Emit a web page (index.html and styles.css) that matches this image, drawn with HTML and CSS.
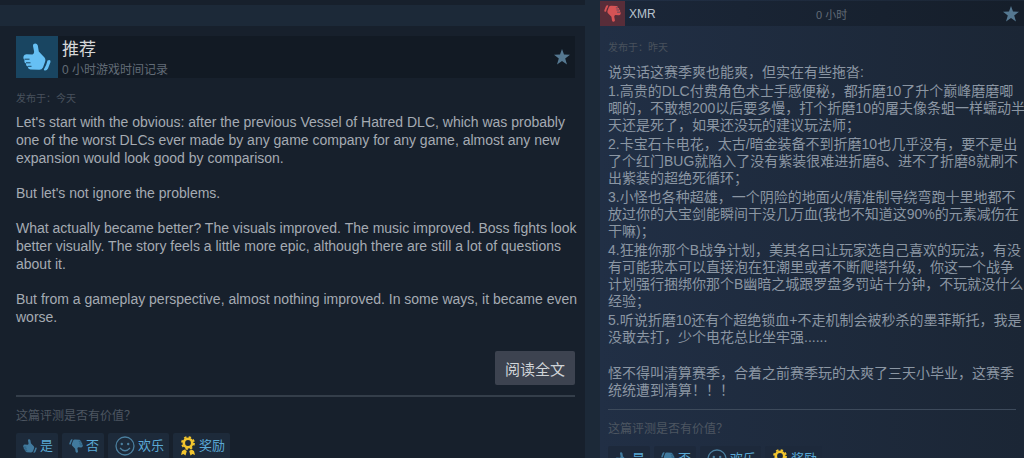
FILE: index.html
```html
<!DOCTYPE html>
<html lang="zh-CN">
<head>
    <meta charset="UTF-8">
    <meta name="viewport" content="width=device-width, initial-scale=1.0">
    <title>评测</title>
    <link rel="stylesheet" href="styles.css">
</head>
<body>
    <!-- shared icons -->
    <svg class="sprite" aria-hidden="true">
        <symbol id="thumb" viewBox="0 0 28 28">
            <path d="M10 3C9.800 -.2 14 -.5 14.800 2.500L15.800 8.500L21.500 14.500Q23 16.500 22 19L20 24.500Q18.800 27 16 26.800L7.500 26.500Q4.500 26.200 5 23.500Q2.600 23.200 3 20.500Q.8 19.800 1.500 17Q-.3 15.500 .8 12.800Q1.300 11.200 3.500 11.200L9.500 11.500Q11.500 10.500 11 8Z"/>
            <path d="M24.500 17.500Q27.800 16 27.500 19L25 25.500Q23.800 28 21.500 27.500Q20.300 27 21.300 25.500Q23.500 22 24.500 17.500Z"/>
            <path class="finger" d="M1.500 16.200H6.500M3 19.800H7.500M5 23.300H8.500"/>
        </symbol>
        <symbol id="star" viewBox="0 0 16 16">
            <path d="M8 0L10 5.600L16 5.800L11.200 9.400L13 15.500L8 12L3 15.500L4.800 9.400L0 5.800L6 5.600Z"/>
        </symbol>
        <symbol id="smile" viewBox="0 0 20 20">
            <circle cx="10" cy="10" r="9" fill="none" stroke="currentColor" stroke-width="1.300"/>
            <circle cx="6.800" cy="8" r="1.200"/>
            <circle cx="13.200" cy="8" r="1.200"/>
            <path d="M5 12Q10 17.500 15 12" fill="none" stroke="currentColor" stroke-width="1.300"/>
        </symbol>
        <symbol id="award" viewBox="0 0 16 20">
            <circle cx="8" cy="7" r="4.200" fill="none" stroke="currentColor" stroke-width="2.600"/>
            <circle cx="8" cy="7" r="6" fill="none" stroke="currentColor" stroke-width="1.800" stroke-dasharray="2.400 2.310"/>
            <path d="M4.500 13.500L6.800 15L5.500 19.500L3.500 18L1 19L2 15ZM11.500 13.500L9.200 15L10.500 19.500L12.500 18L15 19L14 15Z"/>
        </symbol>
    </svg>

    <main class="reviews">
        <section class="column-left">
            <div class="previous-card"></div>
            <article class="card card-main">
                <header class="card-header">
                    <span class="thumb-box"><svg><use href="#thumb"/></svg></span>
                    <div class="header-text">
                        <h2>推荐</h2>
                        <p>0 小时游戏时间记录</p>
                    </div>
                    <svg class="star"><use href="#star"/></svg>
                </header>
                <div class="posted">发布于：今天</div>
                <div class="content">
                    <p>Let's start with the obvious: after the previous Vessel of Hatred DLC, which was probably<br>one of the worst DLCs ever made by any game company for any game, almost any new<br>expansion would look good by comparison.</p>
                    <p>But let's not ignore the problems.</p>
                    <p>What actually became better? The visuals improved. The music improved. Boss fights look<br>better visually. The story feels a little more epic, although there are still a lot of questions<br>about it.</p>
                    <p>But from a gameplay perspective, almost nothing improved. In some ways, it became even<br>worse.</p>
                </div>
                <div class="more">
                    <button type="button" class="read-more">阅读全文</button>
                </div>
                <footer class="rate">
                    <p>这篇评测是否有价值？</p>
                    <div class="rate-buttons">
                        <button type="button"><svg class="icon-thumb"><use href="#thumb"/></svg>是</button>
                        <button type="button"><svg class="icon-thumb down"><use href="#thumb"/></svg>否</button>
                        <button type="button"><svg class="icon-smile"><use href="#smile"/></svg>欢乐</button>
                        <button type="button"><svg class="icon-award"><use href="#award"/></svg>奖励</button>
                    </div>
                </footer>
            </article>
        </section>

        <article class="card card-side">
            <header class="side-header">
                <span class="thumb-box negative"><svg class="down"><use href="#thumb"/></svg></span>
                <h2>XMR</h2>
                <span class="hours">0 小时</span>
                <svg class="star"><use href="#star"/></svg>
            </header>
            <div class="side-body">
                <div class="posted">发布于：昨天</div>
                <div class="content-cn">
                    <p>说实话这赛季爽也能爽，但实在有些拖沓:</p>
                    <p>1.高贵的DLC付费角色术士手感便秘，都折磨10了升个巅峰磨磨唧<br>唧的，不敢想200以后要多慢，打个折磨10的屠夫像条蛆一样蠕动半<br>天还是死了，如果还没玩的建议玩法师；</p>
                    <p>2.卡宝石卡电花，太古/暗金装备不到折磨10也几乎没有，要不是出<br>了个红门BUG就陷入了没有紫装很难进折磨8、进不了折磨8就刷不<br>出紫装的超绝死循环；</p>
                    <p>3.小怪也各种超雄，一个阴险的地面火/精准制导绕弯跑十里地都不<br>放过你的大宝剑能瞬间干没几万血(我也不知道这90%的元素减伤在<br>干嘛)；</p>
                    <p>4.狂推你那个B战争计划，美其名曰让玩家选自己喜欢的玩法，有没<br>有可能我本可以直接泡在狂潮里或者不断爬塔升级，你这一个战争<br>计划强行捆绑你那个B幽暗之城跟罗盘多罚站十分钟，不玩就没什么<br>经验；</p>
                    <p>5.听说折磨10还有个超绝锁血+不走机制会被秒杀的墨菲斯托，我是<br>没敢去打，少个电花总比坐牢强......</p>
                    <p class="closing">怪不得叫清算赛季，合着之前赛季玩的太爽了三天小毕业，这赛季<br>统统遭到清算！！！</p>
                </div>
                <footer class="rate">
                    <p>这篇评测是否有价值？</p>
                    <div class="rate-buttons">
                        <button type="button"><svg class="icon-thumb"><use href="#thumb"/></svg>是</button>
                        <button type="button"><svg class="icon-thumb down"><use href="#thumb"/></svg>否</button>
                        <button type="button"><svg class="icon-smile"><use href="#smile"/></svg>欢乐</button>
                        <button type="button"><svg class="icon-award"><use href="#award"/></svg>奖励</button>
                    </div>
                </footer>
            </div>
        </article>
    </main>
</body>
</html>
```
FILE: styles.css
```css
* {
    box-sizing: border-box;
}
body {
    margin: 0;
    height: 100vh;
    overflow: hidden;
    background-color: #1c2938;
    color: #a5abb3;
    font-family: "Liberation Sans", "Noto Sans CJK SC", sans-serif;
    font-size: 14px;
}
h2, p {
    margin: 0;
    font-weight: normal;
}
svg {
    fill: currentColor;
    flex: none;
}
.sprite {
    position: absolute;
    width: 0;
    height: 0;
}
.finger {
    fill: none;
    stroke: #194561;
    stroke-width: 1;
}
.down {
    transform: rotate(180deg);
}
.reviews {
    display: flex;
    gap: 15px;
    height: 100%;
}
.column-left {
    flex: 585;
    min-width: 0;
    display: flex;
    flex-direction: column;
    gap: 21px;
}
.previous-card {
    flex: none;
    height: 5px;
    background-color: #17202c;
}
.card-main {
    flex: 1;
    padding: 10px 10px 0 16px;
    background-color: #17202c;
}

/* header of the large review */
.card-header {
    display: flex;
    align-items: center;
    height: 42px;
    padding-right: 5px;
    background-color: #121a24;
}
.thumb-box {
    display: flex;
    align-items: center;
    justify-content: center;
    width: 42px;
    height: 42px;
    background-color: #194561;
    color: #66c0f4;
}
.thumb-box svg {
    width: 28px;
    height: 28px;
}
.header-text {
    flex: 1;
    padding: 4px 0 0 4px;
}
.header-text h2 {
    font-size: 17px;
    line-height: 22px;
    color: #d6d7d8;
}
.header-text p {
    font-size: 12px;
    line-height: 18px;
    color: #626c77;
}
.star {
    width: 16px;
    height: 16px;
    color: #557891;
}
.posted {
    font-size: 10px;
    line-height: 16px;
    color: #48515c;
}
.card-main .posted {
    padding-top: 13px;
}
.content {
    padding-top: 6px;
    line-height: 18px;
    white-space: nowrap;
}
.content p + p {
    margin-top: 17px;
}
.more {
    display: flex;
    justify-content: flex-end;
    padding-top: 25px;
}
.read-more {
    height: 34px;
    padding: 0 10px;
    border: none;
    border-radius: 2px;
    background-color: #3d4350;
    color: #d0d4d8;
    font: inherit;
    font-size: 15px;
    cursor: pointer;
}

/* helpful votes */
.rate {
    margin-top: 10px;
    border-top: 2px solid #343e4a;
}
.rate p {
    padding: 9px 0 7px;
    font-size: 12px;
    line-height: 20px;
    color: #4d5661;
}
.rate-buttons {
    display: flex;
    gap: 4px;
}
.rate-buttons button {
    display: flex;
    align-items: center;
    gap: 3px;
    height: 26px;
    padding: 0 5px 0 7px;
    border: none;
    border-radius: 2px;
    background-color: #1d2a3a;
    color: #5aa9d6;
    font: inherit;
    font-size: 13px;
    line-height: 18px;
    cursor: pointer;
}
.icon-thumb {
    width: 14px;
    height: 14px;
    color: #417a9e;
}
.icon-smile {
    width: 20px;
    height: 20px;
    color: #4b7f9f;
}
.icon-award {
    width: 16px;
    height: 20px;
    color: #f2c52e;
}
.rate-buttons .finger {
    stroke: none;
}

/* short review on the right */
.card-side {
    flex: 424;
    min-width: 0;
    padding-top: 1px;
    background: linear-gradient(to right, #212f45, #1b2635);
}
.side-header {
    display: flex;
    align-items: center;
    height: 25px;
    padding-right: 5px;
    background: linear-gradient(to right, #1b2739, #151e2a);
}
.side-header h2 {
    flex: 1;
    padding-left: 4px;
    font-size: 12px;
    color: #b9c3cf;
}
.side-header .thumb-box {
    width: 25px;
    height: 25px;
}
.side-header .thumb-box svg {
    width: 17px;
    height: 17px;
}
.thumb-box.negative {
    background-color: #582d39;
    color: #d65355;
}
.negative .finger {
    stroke: #582d39;
}
.hours {
    flex: 1;
    font-size: 11px;
    color: #626c77;
}
.side-body {
    padding: 14px 8px 0;
}
.content-cn {
    padding-top: 8px;
    color: #8b96a3;
    line-height: 17px;
    white-space: nowrap;
}
.content-cn p + p {
    margin-top: 2px;
}
.content-cn .closing {
    margin-top: 19px;
}
.side-body .rate {
    border-top-width: 1px;
    border-color: #3d4a5b;
}
.side-body .rate-buttons button {
    background-color: #1d293b;
}
```
